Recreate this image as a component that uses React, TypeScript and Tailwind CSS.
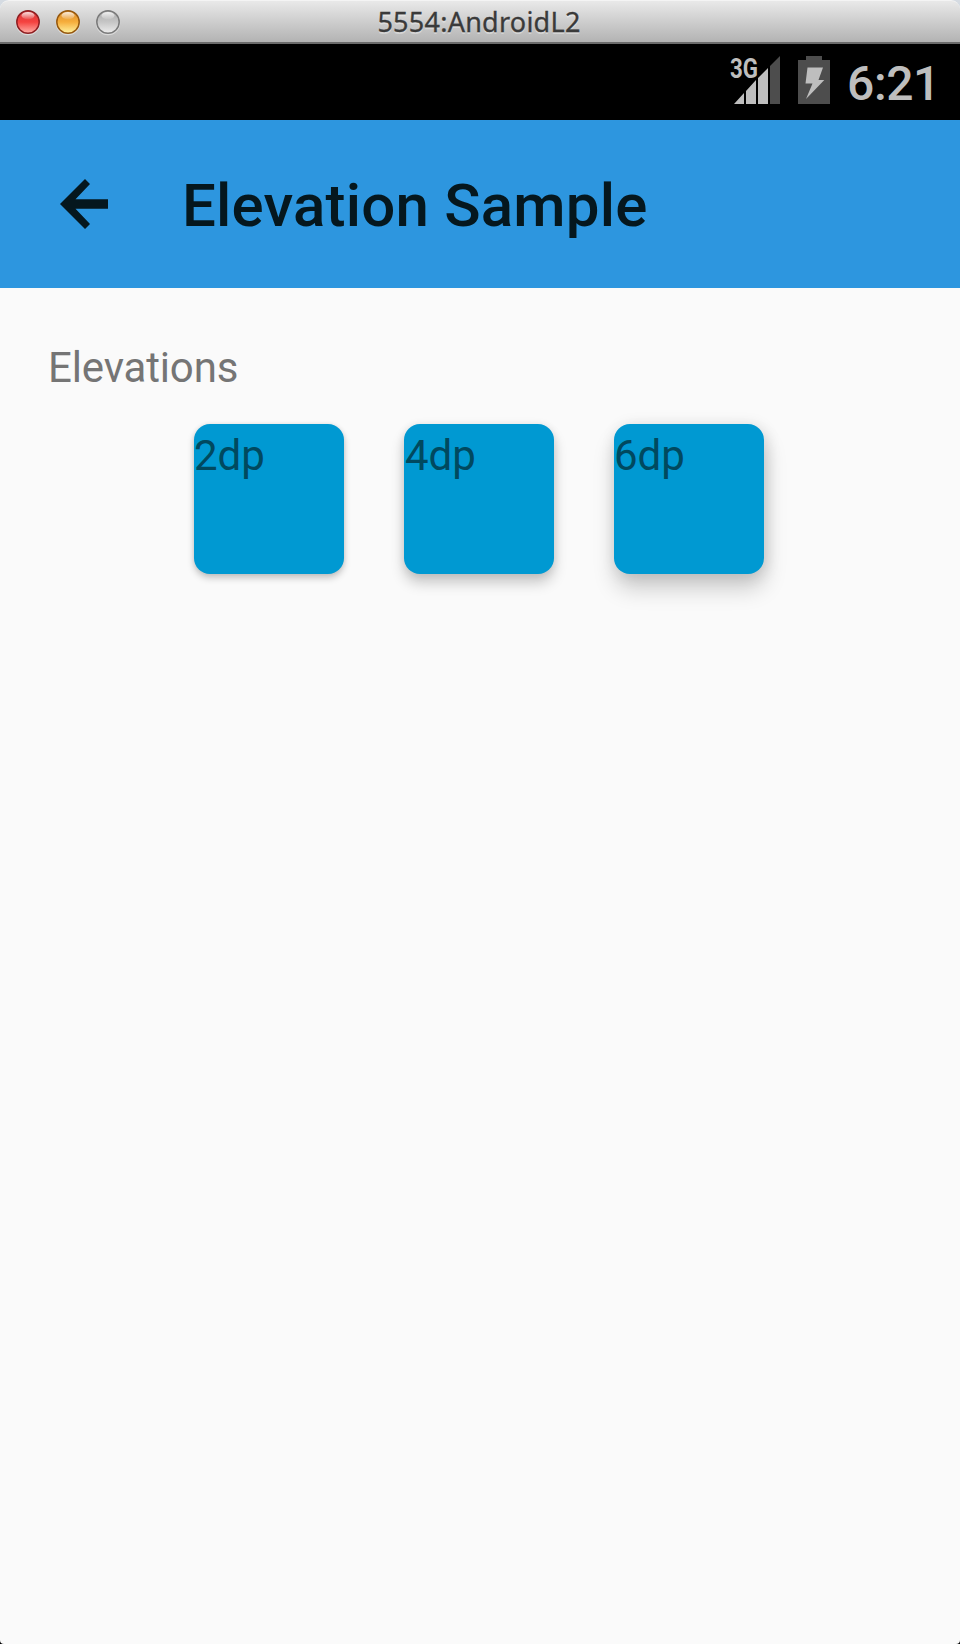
const tiles = [
  { label: '2dp', inset: 'pl-0', shadow: 'shadow-[0_4px_7px_rgba(0,0,0,0.22),0_0_4px_rgba(0,0,0,0.08)]' },
  { label: '4dp', inset: 'pl-px', shadow: 'shadow-[0_9px_14px_rgba(0,0,0,0.2),0_1px_9px_rgba(0,0,0,0.1)]' },
  { label: '6dp', inset: 'pl-0', shadow: 'shadow-[1px_15px_22px_rgba(0,0,0,0.18),2px_2px_15px_rgba(0,0,0,0.13)]' },
];

const lights = [
  { id: 'r', edge: '#8e1f22', top: '#d8383a', mid: '#f5423f', low: '#ffb0a8' },
  { id: 'y', edge: '#96580f', top: '#d98a2a', mid: '#f6ae3c', low: '#fff3a0' },
  { id: 'g', edge: '#7a7a7a', top: '#a9a9a9', mid: '#c6c6c6', low: '#ededed' },
];

function WindowBar() {
  return (
    <header className="relative flex h-[44px] shrink-0 items-center border-b-2 border-[#6b6b6b] bg-[#d5dbe2]">
      <div className="flex h-full w-full items-center justify-center rounded-t-[9px] border-t border-[#f4f4f4] bg-linear-to-b from-[#e9e9e9] to-[#b3b3b3]">
        <h1 className="pr-[2px] font-['Noto_Sans','Lucida_Grande',sans-serif] text-[27px] leading-[40px] tracking-[0.25px] whitespace-nowrap text-[#3a3a3a] [-webkit-text-stroke:0.3px_#3a3a3a] [text-shadow:0_2px_0_rgba(255,255,255,0.35)]">
          5554:AndroidL2
        </h1>
      </div>
      <div className="absolute top-[9px] left-[15px] flex gap-[14px]">
        {lights.map((l) => (
          <svg key={l.id} width="26" height="27" viewBox="0 0 26 27">
            <defs>
              <linearGradient id={`body-${l.id}`} x1="0" y1="0" x2="0" y2="1">
                <stop offset="0" stopColor={l.top} />
                <stop offset="0.5" stopColor={l.mid} />
                <stop offset="1" stopColor={l.low} />
              </linearGradient>
              <linearGradient id={`shine-${l.id}`} x1="0" y1="0" x2="0" y2="1">
                <stop offset="0" stopColor="#fff" stopOpacity="0.85" />
                <stop offset="1" stopColor="#fff" stopOpacity="0.1" />
              </linearGradient>
            </defs>
            <circle cx="13" cy="14" r="12.2" fill="#fff" opacity="0.45" />
            <circle cx="13" cy="13" r="11.2" fill={`url(#body-${l.id})`} stroke={l.edge} strokeWidth="1.5" />
            <ellipse cx="13" cy="6.6" rx="6.5" ry="3.6" fill={`url(#shine-${l.id})`} />
          </svg>
        ))}
      </div>
    </header>
  );
}

function StatusBar() {
  return (
    <div className="flex h-[76px] shrink-0 items-start justify-end bg-black pr-[20px]">
      <svg className="mt-[8px] mr-[16px]" width="60" height="56" viewBox="722 52 60 56">
        <path d="M734 104L744 93V104ZM746 104V91L756 80V104ZM758 104V78L768 68V104Z" fill="#bebebe" />
        <path d="M770 104V66L780 56V104Z" fill="#4d4d4d" />
        <text x="730" y="78" textLength="28" lengthAdjust="spacingAndGlyphs" fontFamily="Roboto, sans-serif" fontWeight="700" fontSize="28" fill="#bebebe" stroke="#000" strokeWidth="4" paintOrder="stroke">
          3G
        </text>
      </svg>
      <svg className="mt-[12px] mr-[17px]" width="32" height="48" viewBox="798 56 32 48">
        <path d="M806 56H822V60H830V104H798V60H806Z" fill="#4d4d4d" />
        <path d="M807.5 67.5H823L818.5 80H824.3L806 99L812.5 83.5H805.5Z" fill="#bebebe" />
      </svg>
      <time className="mt-[12px] text-[48px] leading-[56px] font-medium tracking-[-0.4px] text-[#bebebe]">6:21</time>
    </div>
  );
}

export default function App() {
  return (
    <div className="flex h-[1644px] w-[960px] flex-col overflow-hidden bg-black font-[Roboto,sans-serif]">
      <WindowBar />
      <StatusBar />
      <div className="flex h-[168px] shrink-0 items-center bg-[#2d96df] pl-[60px] text-[#05171e]">
        <svg width="48" height="52" viewBox="60 178 48 52" fill="currentColor">
          <path d="M60 204L85 179L90 184L75.5 199.3H108V208.7H75.5L90 224L85 229Z" />
        </svg>
        <h2 className="ml-[74px] pt-[3px] text-[60px] leading-[72px] font-medium tracking-[0.2px] whitespace-nowrap">Elevation Sample</h2>
      </div>
      <main className="flex flex-1 flex-col rounded-b-[4px] bg-[#fafafa] pt-[55px]">
        <p className="pl-[48px] text-[42px] leading-[50px] tracking-[-0.15px] text-[#757575]">Elevations</p>
        <div className="mt-[31px] flex gap-[60px] pl-[194px]">
          {tiles.map((t) => (
            <div key={t.label} className={`h-[150px] w-[150px] rounded-[16px] bg-[#0099d2] pt-[7px] ${t.inset} ${t.shadow}`}>
              <span className="block text-[42px] leading-[50px] text-[#00495f]">{t.label}</span>
            </div>
          ))}
        </div>
      </main>
    </div>
  );
}
